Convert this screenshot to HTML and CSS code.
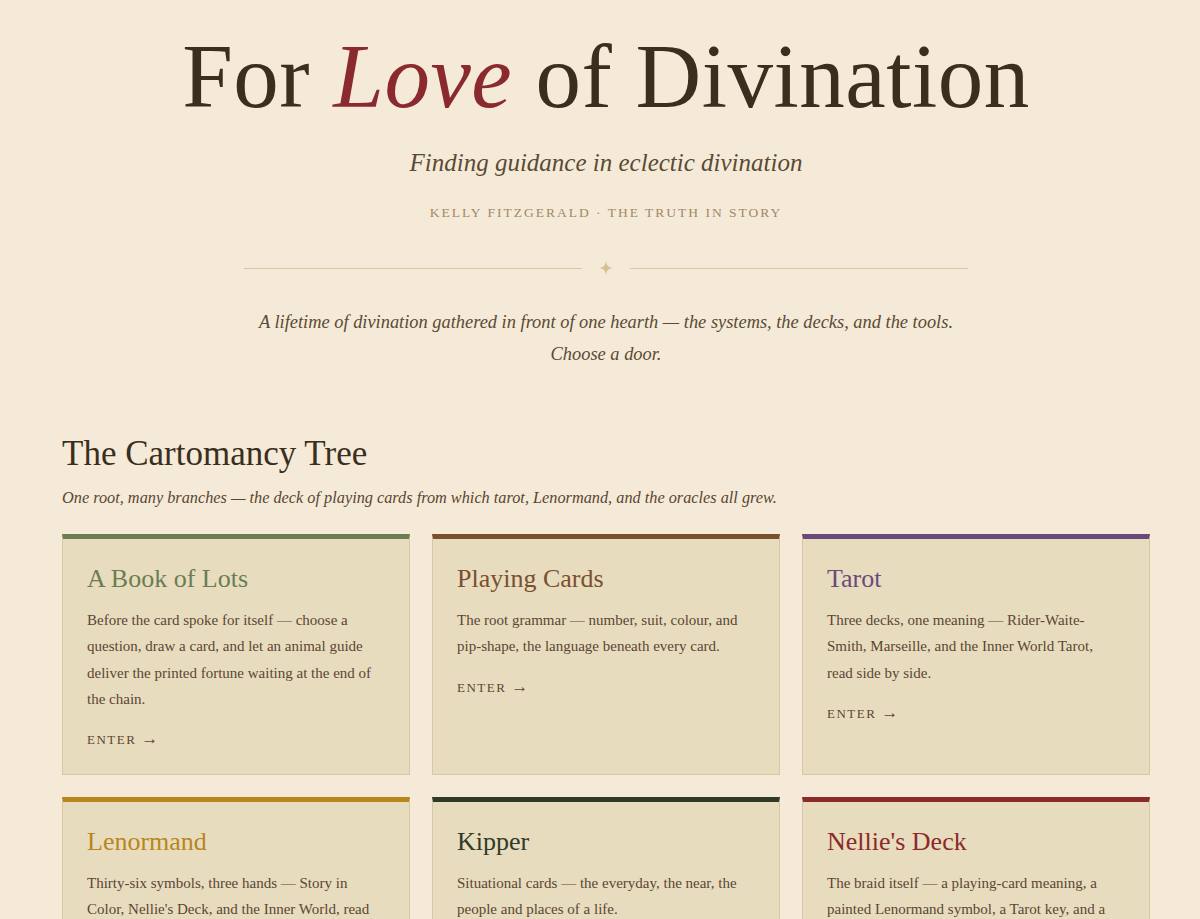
FILE: index.html
```html
<!DOCTYPE html>
<html lang="en">
<head>
    <meta charset="UTF-8">
    <meta name="viewport" content="width=device-width, initial-scale=1.0">
    <title>For Love of Divination</title>
    <link rel="stylesheet" href="styles.css">
</head>
<body>

<div class="page">
    <header class="masthead">
        <h1>For <em>Love</em> of Divination</h1>
        <p class="tagline">Finding guidance in eclectic divination</p>
        <p class="byline">Kelly Fitzgerald · The Truth in Story</p>
        <div class="divider">
            <span class="rule"></span>
            <svg class="star" width="14" height="14" viewBox="0 0 14 14">
                <path d="M7 0 C7.6 4.6 9.4 6.4 14 7 C9.4 7.6 7.6 9.4 7 14 C6.4 9.4 4.6 7.6 0 7 C4.6 6.4 6.4 4.6 7 0 Z" fill="#d6c193"/>
            </svg>
            <span class="rule"></span>
        </div>
        <p class="intro">A lifetime of divination gathered in front of one hearth — the systems, the decks, and the tools.<br>Choose a door.</p>
    </header>

    <!-- Cartomancy section -->
    <section class="tree">
        <h2>The Cartomancy Tree</h2>
        <p class="lede">One root, many branches — the deck of playing cards from which tarot, Lenormand, and the oracles all grew.</p>

        <div class="cards">
            <a class="card green" href="#">
                <h3>A Book of Lots</h3>
                <p>Before the card spoke for itself — choose a question, draw a card, and let an animal guide deliver the printed fortune waiting at the end of the chain.</p>
                <span class="enter">Enter <span class="arrow">→</span></span>
            </a>
            <a class="card brown" href="#">
                <h3>Playing Cards</h3>
                <p>The root grammar — number, suit, colour, and pip-shape, the language beneath every card.</p>
                <span class="enter">Enter <span class="arrow">→</span></span>
            </a>
            <a class="card purple" href="#">
                <h3>Tarot</h3>
                <p>Three decks, one meaning — Rider-Waite-Smith, Marseille, and the Inner World Tarot, read side by side.</p>
                <span class="enter">Enter <span class="arrow">→</span></span>
            </a>
            <a class="card gold" href="#">
                <h3>Lenormand</h3>
                <p>Thirty-six symbols, three hands — Story in Color, Nellie's Deck, and the Inner World, read side by side.</p>
                <span class="enter">Enter <span class="arrow">→</span></span>
            </a>
            <a class="card forest" href="#">
                <h3>Kipper</h3>
                <p>Situational cards — the everyday, the near, the people and places of a life.</p>
                <span class="enter">Enter <span class="arrow">→</span></span>
            </a>
            <a class="card red" href="#">
                <h3>Nellie's Deck</h3>
                <p>The braid itself — a playing-card meaning, a painted Lenormand symbol, a Tarot key, and a single story told three ways.</p>
                <span class="enter">Enter <span class="arrow">→</span></span>
            </a>
        </div>
    </section>
</div>

</body>
</html>
```

FILE: styles.css
```css
/* Basic styling */
body {
    margin: 0;
    background: #f5ead7;
    color: #3a2e1f;
    font-family: 'Liberation Serif', 'Times New Roman', serif;
}

.page {
    padding: 0 50px 40px 62px;
}

/* Masthead */
.masthead {
    text-align: center;
}

h1 {
    margin: 0;
    padding-top: 22px;
    font-size: 91px;
    font-weight: normal;
    line-height: 1.2;
    color: #3a2e1f;
    letter-spacing: 0.5px;
}

h1 em {
    color: #8b2a2e;
}

.tagline {
    margin: 18px 0 0;
    font-size: 25px;
    font-style: italic;
    color: #5a4a36;
}

.byline {
    margin: 28px 0 0;
    font-size: 13.5px;
    letter-spacing: 2px;
    text-transform: uppercase;
    color: #a08868;
}

.divider {
    display: flex;
    align-items: center;
    justify-content: center;
    gap: 17px;
    margin: 40px auto 0;
    width: 724px;
}

.rule {
    flex: 1;
    height: 1px;
    background: #d9c9a2;
}

.intro {
    margin: 31px 0 0;
    font-size: 18.4px;
    line-height: 32px;
    font-style: italic;
    color: #5a4a36;
}

/* Section */
.tree {
    margin-top: 64px;
}

h2 {
    margin: 0;
    font-size: 35px;
    font-weight: normal;
    color: #3a2e1f;
}

.lede {
    margin: 14px 0 0;
    font-size: 16.3px;
    font-style: italic;
    color: #5a4632;
}

.cards {
    display: grid;
    grid-template-columns: repeat(3, 1fr);
    gap: 22px;
    margin-top: 26px;
}

.card {
    display: block;
    padding: 23px 32px 26px 24px;
    background: #e8dcbf;
    border: 1px solid #d8c8a2;
    border-top: 5px solid #6b7d52;
    text-decoration: none;
    color: #5a4632;
}

.card h3 {
    margin: 0;
    font-size: 26px;
    font-weight: normal;
    line-height: 1.3;
}

.card p {
    margin: 11px 0 0;
    font-size: 15px;
    line-height: 26.3px;
}

.enter {
    display: inline-block;
    margin-top: 18px;
    font-size: 13px;
    letter-spacing: 1.5px;
    text-transform: uppercase;
    color: #5a4632;
}

.arrow {
    font-size: 17px;
    letter-spacing: 0;
    line-height: 1;
}

.green { border-top-color: #6b7d52; }
.green h3 { color: #6b7d52; }
.brown { border-top-color: #7a4f2e; }
.brown h3 { color: #7a4f2e; }
.purple { border-top-color: #6a4a7c; }
.purple h3 { color: #6a4a7c; }
.gold { border-top-color: #b8861b; }
.gold h3 { color: #b8861b; }
.forest { border-top-color: #2f3b28; }
.forest h3 { color: #2f3b28; }
.red { border-top-color: #8b2a2a; }
.red h3 { color: #8b2a2a; }
```
